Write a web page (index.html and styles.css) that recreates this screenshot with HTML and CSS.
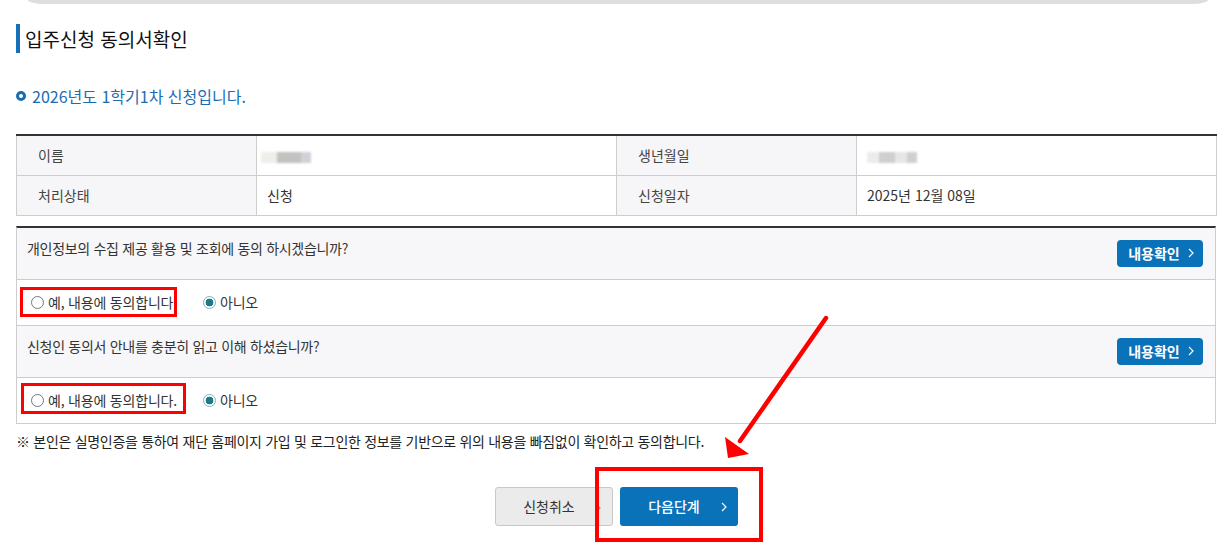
FILE: index.html
```html
<!DOCTYPE html>
<html lang="ko">
<head>
<meta charset="utf-8">
<title>입주신청 동의서확인</title>
<link rel="stylesheet" href="styles.css">
</head>
<body>
<div class="page">
  <div class="topbar"></div>
  <h2 class="title">입주신청 동의서확인</h2>
  <p class="notice"><span class="ring"></span>2026년도 1학기1차 신청입니다.</p>

  <table class="info">
    <tr>
      <th>이름</th>
      <td><span class="blur blur-name"><i></i><i></i><i></i></span></td>
      <th>생년월일</th>
      <td><span class="blur blur-birth"><i></i><i></i><i></i><i></i></span></td>
    </tr>
    <tr>
      <th>처리상태</th>
      <td>신청</td>
      <th>신청일자</th>
      <td>2025년 12월 08일</td>
    </tr>
  </table>

  <div class="agree">
    <div class="q-row">
      <p class="q-text">개인정보의 수집 제공 활용 및 조회에 동의 하시겠습니까?</p>
      <a class="btn-view">내용확인<svg class="chev" viewBox="0 0 6 10" width="6" height="10"><path d="M1 1l4 4-4 4" fill="none" stroke="currentColor" stroke-width="1.2"/></svg></a>
    </div>
    <div class="a-row">
      <label class="opt opt-yes"><span class="radio"></span>예, 내용에 동의합니다</label>
      <label class="opt"><span class="radio on"></span>아니오</label>
    </div>
    <div class="q-row">
      <p class="q-text">신청인 동의서 안내를 충분히 읽고 이해 하셨습니까?</p>
      <a class="btn-view">내용확인<svg class="chev" viewBox="0 0 6 10" width="6" height="10"><path d="M1 1l4 4-4 4" fill="none" stroke="currentColor" stroke-width="1.2"/></svg></a>
    </div>
    <div class="a-row">
      <label class="opt opt-yes"><span class="radio"></span>예, 내용에 동의합니다.</label>
      <label class="opt"><span class="radio on"></span>아니오</label>
    </div>
  </div>

  <p class="footnote">※ 본인은 실명인증을 통하여 재단 홈페이지 가입 및 로그인한 정보를 기반으로 위의 내용을 빠짐없이 확인하고 동의합니다.</p>

  <div class="btns">
    <a class="btn btn-cancel">신청취소<svg class="chev" viewBox="0 0 6 10" width="6" height="10"><path d="M1 1l4 4-4 4" fill="none" stroke="currentColor" stroke-width="1.2"/></svg></a>
    <a class="btn btn-next">다음단계<svg class="chev" viewBox="0 0 6 10" width="6" height="10"><path d="M1 1l4 4-4 4" fill="none" stroke="currentColor" stroke-width="1.2"/></svg></a>
  </div>

  <div class="mark mark-1"></div>
  <div class="mark mark-2"></div>
  <div class="mark mark-3"></div>
  <svg class="arrow" width="1232" height="547" viewBox="0 0 1232 547">
    <line x1="826" y1="318" x2="740" y2="441" stroke="#ff0000" stroke-width="4.5" stroke-linecap="round"/>
    <polygon points="728,458 725,437 749,454" fill="#ff0000"/>
  </svg>
</div>
</body>
</html>
```

FILE: styles.css
```css
* { box-sizing: border-box; }
html, body { margin: 0; padding: 0; background: #fff; }
body {
  font-family: "Noto Sans CJK KR", "Noto Sans", sans-serif;
  color: #333;
  font-size: 14px;
}
.page {
  position: relative;
  width: 1232px;
  height: 547px;
  overflow: hidden;
}
.topbar {
  height: 4px;
  margin: 0 24px 0 28px;
  background: #dedede;
  border-radius: 0 0 16px 16px / 0 0 4px 4px;
}
.title {
  margin: 20px 16px 0;
  height: 29px;
  border-left: 4px solid #1570b8;
  padding-left: 5px;
  font-size: 19px;
  font-weight: 400;
  line-height: 29px;
  color: #111;
}
.notice {
  margin: 33px 16px 0;
  display: flex;
  align-items: center;
  height: 20px;
  line-height: 20px;
  font-size: 16px;
  color: #1b6db3;
}
.ring {
  width: 10px;
  height: 10px;
  border: 3px solid #1b6db3;
  border-radius: 50%;
  margin-right: 6px;
}
.info {
  margin: 28px 16px 0;
  width: 1200px;
  border-collapse: collapse;
  border-top: 2px solid #333;
  table-layout: fixed;
}
.info th, .info td {
  border: 1px solid #cdcdcd;
  height: 40px;
  padding: 0;
  font-size: 14px;
  font-weight: 400;
  text-align: left;
  line-height: 20px;
  color: #333;
}
.info tr:first-child th, .info tr:first-child td { border-top: 0; }
.info th {
  width: 240px;
  background: #f6f6f8;
  padding-left: 21px;
  color: #444;
}
.info td {
  width: 360px;
  padding-left: 10px;
}
.blur {
  display: inline-flex;
  vertical-align: middle;
  filter: blur(1.2px);
}
.blur i { display: block; height: 11px; }
.blur-name { margin-left: -6px; }
.blur-name i:nth-child(1) { width: 16px; background: #efeeea; }
.blur-name i:nth-child(2) { width: 24px; background: #c4c2c0; }
.blur-name i:nth-child(3) { width: 10px; background: #cfd2d6; }
.blur-birth i:nth-child(1) { width: 12px; background: #ececec; }
.blur-birth i:nth-child(2) { width: 16px; background: #cfcfd1; }
.blur-birth i:nth-child(3) { width: 12px; background: #e6e6e6; }
.blur-birth i:nth-child(4) { width: 10px; background: #d0d0d0; }

.agree {
  margin: 10px 16px 0;
  width: 1200px;
  border-top: 2px solid #333;
  border-left: 1px solid #cdcdcd;
  border-right: 1px solid #cdcdcd;
}
.q-row {
  display: flex;
  justify-content: space-between;
  align-items: flex-start;
  height: 52px;
  background: #f7f7f9;
  border-bottom: 1px solid #cdcdcd;
  padding: 10px 12px 0 10px;
}
.q-text {
  margin: 0;
  line-height: 20px;
  font-size: 14px;
  color: #333;
  letter-spacing: -0.3px;
}
.btn-view {
  margin-top: 2px;
  display: flex;
  align-items: center;
  justify-content: center;
  gap: 8px;
  width: 86px;
  height: 27px;
  border-radius: 4px;
  background: #0a72b8;
  color: #fff;
  font-size: 14px;
  font-weight: 700;
  padding-left: 2px;
}
.a-row {
  display: flex;
  align-items: center;
  height: 46px;
  border-bottom: 1px solid #cdcdcd;
  padding-left: 14px;
}
.opt {
  display: flex;
  align-items: center;
  font-size: 14px;
  line-height: 20px;
  color: #333;
  letter-spacing: -0.2px;
}
.opt-yes { width: 172px; }
.radio {
  width: 13px;
  height: 13px;
  border: 1px solid #777;
  border-radius: 50%;
  margin-right: 4px;
  background: #fff;
}
.radio.on {
  border: 1px solid #7fb3bd;
  background: radial-gradient(circle, #1f7a88 0 3.6px, #fff 4.2px);
}
.footnote {
  margin: 7px 16px 0;
  line-height: 20px;
  font-size: 14px;
  color: #222;
  letter-spacing: -0.3px;
}
.btns {
  margin-top: 36px;
  display: flex;
  justify-content: center;
  gap: 7px;
  padding-left: 1px;
}
.btn {
  position: relative;
  display: flex;
  align-items: center;
  justify-content: center;
  width: 118px;
  height: 39px;
  border-radius: 3px;
  font-size: 14px;
  padding-right: 10px;
}
.btn .chev { position: absolute; right: 11px; top: 15px; }
.btn-cancel {
  background: #ebebeb;
  border: 1px solid #c8c8c8;
  color: #333;
}
.btn-cancel .chev { color: #999; }
.btn-next {
  background: #0a72b8;
  color: #fff;
  font-weight: 500;
}
.btn-next .chev { color: #fff; }

.mark {
  position: absolute;
  border: 3px solid #ff0000;
  pointer-events: none;
}
.mark-1 { left: 20px; top: 287px; width: 157px; height: 30px; }
.mark-2 { left: 21px; top: 383px; width: 165px; height: 31px; }
.mark-3 { left: 595px; top: 467px; width: 168px; height: 75px; border-width: 4px; }
.arrow { position: absolute; left: 0; top: 0; pointer-events: none; }
```
